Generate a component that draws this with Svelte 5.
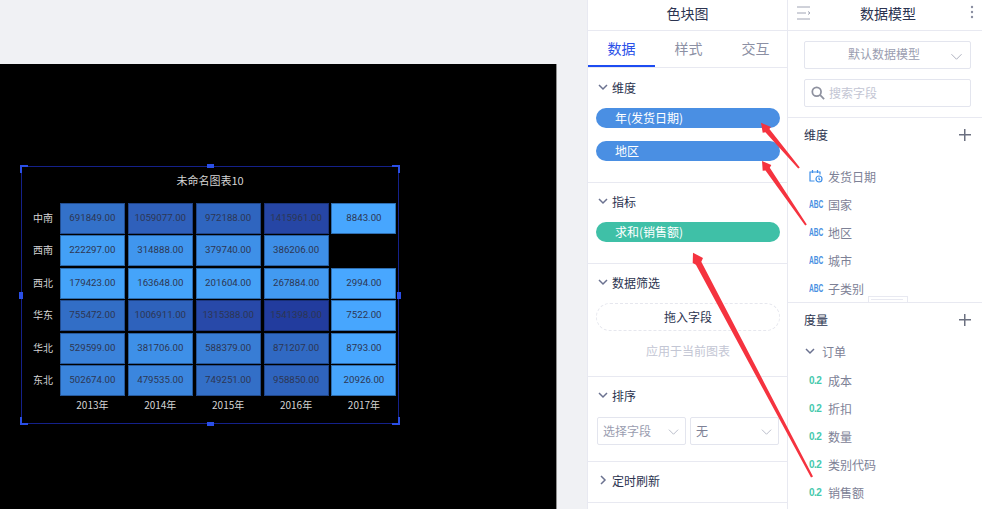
<script>
  const years = ['2013年', '2014年', '2015年', '2016年', '2017年'];
  const rows = [
    { name: '中南', cells: [['691849.00', '#3371c9'], ['1059077.00', '#2f60bb'], ['972188.00', '#2f65bf'], ['1415961.00', '#2646a5'], ['8843.00', '#47a6fe']] },
    { name: '西南', cells: [['222297.00', '#43a0f6'], ['314888.00', '#4096ee'], ['379740.00', '#3e90e8'], ['386206.00', '#3e8fe7'], null] },
    { name: '西北', cells: [['179423.00', '#44a3f9'], ['163648.00', '#45a4fa'], ['201604.00', '#44a1f7'], ['267884.00', '#429af1'], ['2994.00', '#48a7ff']] },
    { name: '华东', cells: [['755472.00', '#326ec6'], ['1006911.00', '#2e62bc'], ['1315388.00', '#2849a9'], ['1541398.00', '#223c9e'], ['7522.00', '#47a6fe']] },
    { name: '华北', cells: [['529599.00', '#3a82da'], ['381706.00', '#3e90e8'], ['588379.00', '#387dd5'], ['871207.00', '#3069c3'], ['8793.00', '#47a6fe']] },
    { name: '东北', cells: [['502674.00', '#3a84dc'], ['479535.00', '#3b86de'], ['749251.00', '#336fc7'], ['958850.00', '#2f64be'], ['20926.00', '#47a5fc']] }
  ];
  const dims = [
    { t: 'date', name: '发货日期' },
    { t: 'abc', name: '国家' },
    { t: 'abc', name: '地区' },
    { t: 'abc', name: '城市' },
    { t: 'abc', name: '子类别' }
  ];
  const measures = ['成本', '折扣', '数量', '类别代码', '销售额'];
</script>

<div class="page">
  <div class="stage">
    <div class="canvas">
      <div class="chart">
        <span class="h tl"></span><span class="h tr"></span><span class="h bl"></span><span class="h br"></span>
        <span class="m mt"></span><span class="m mb"></span><span class="m ml"></span><span class="m mr"></span>
        <div class="chart-title">未命名图表10</div>
        <div class="heat">
          {#each rows as row}
            <div class="rowname">{row.name}</div>
            {#each row.cells as c}
              {#if c}
                <div class="cell" style="background:{c[1]}">{c[0]}</div>
              {:else}
                <div></div>
              {/if}
            {/each}
          {/each}
          <div></div>
          {#each years as y}
            <div class="year">{y}</div>
          {/each}
        </div>
      </div>
    </div>
  </div>

  <aside class="config">
    <div class="head">色块图</div>
    <div class="tabs">
      <div class="tab active">数据</div>
      <div class="tab">样式</div>
      <div class="tab">交互</div>
    </div>
    <section class="sec s1">
      <div class="sec-title first"><svg class="chev" viewBox="0 0 10 10"><path d="M1 3l4 4 4-4" /></svg>维度</div>
      <div class="pill blue">年(发货日期)</div>
      <div class="pill blue">地区</div>
    </section>
    <section class="sec s2">
      <div class="sec-title tight"><svg class="chev" viewBox="0 0 10 10"><path d="M1 3l4 4 4-4" /></svg>指标</div>
      <div class="pill green">求和(销售额)</div>
    </section>
    <section class="sec s3">
      <div class="sec-title tight"><svg class="chev" viewBox="0 0 10 10"><path d="M1 3l4 4 4-4" /></svg>数据筛选</div>
      <div class="drop">拖入字段</div>
      <div class="apply">应用于当前图表</div>
    </section>
    <section class="sec s4">
      <div class="sec-title"><svg class="chev" viewBox="0 0 10 10"><path d="M1 3l4 4 4-4" /></svg>排序</div>
      <div class="selects">
        <div class="sel">选择字段<svg viewBox="0 0 12 12"><path d="M1 4l5 5 5-5" /></svg></div>
        <div class="sel dark">无<svg viewBox="0 0 12 12"><path d="M1 4l5 5 5-5" /></svg></div>
      </div>
    </section>
    <section class="sec s5">
      <div class="sec-title"><svg class="chev" viewBox="0 0 10 10"><path d="M3 1l4 4-4 4" /></svg>定时刷新</div>
    </section>
  </aside>

  <aside class="model">
    <div class="head mhead">
      <svg class="menu" viewBox="0 0 14 14"><path d="M0 1h13M0 7h9M0 13h13M11 5.500L13 7l-2 1.500" /></svg>
      数据模型
      <svg class="dots" viewBox="0 0 4 14"><circle cx="2" cy="2" r="1.200" /><circle cx="2" cy="7" r="1.200" /><circle cx="2" cy="12" r="1.200" /></svg>
    </div>
    <div class="filters">
      <div class="modelsel">默认数据模型<svg viewBox="0 0 12 12"><path d="M0.500 3.500L6 9l5.500-5.500" /></svg></div>
      <div class="search">
        <svg viewBox="0 0 16 16"><circle cx="6.500" cy="6.500" r="5" /><path d="M10.500 10.500L15 15" /></svg>
        搜索字段
      </div>
    </div>
    <div class="group-head">维度<span class="plus"></span></div>
    <div class="list">
      <div class="field clipped">订单日期</div>
      {#each dims as d}
        <div class="field">
          {#if d.t === 'date'}
            <svg class="ico" viewBox="0 0 14 14"><path d="M5.500 12H1V3h10v2.500M3.500 1v3M8.500 1v3" /><circle cx="10" cy="10" r="3" /><path d="M10 8.500V10l1 1" /></svg>
          {:else}
            <span class="abc"><span>ABC</span></span>
          {/if}
          {d.name}
        </div>
      {/each}
    </div>
    <div class="group-head second">度量<span class="plus"></span><span class="grip"></span></div>
    <div class="order"><svg class="chev" viewBox="0 0 10 10"><path d="M1 3l4 4 4-4" /></svg>订单</div>
    {#each measures as m}
      <div class="field"><span class="num">0.2</span>{m}</div>
    {/each}
  </aside>

  <svg class="arrows" viewBox="0 0 982 509">
    <polygon points="761,122.7 771,127 769.4,129 799.8,167.4 798.2,168.6 765.4,132.2 762.7,132.7" />
    <polygon points="762,161 771.3,165 769.8,167.8 806.8,224.4 805.2,225.6 765.5,170.6 762.7,170.7" />
    <polygon points="693,252.7 703,258 701.3,261.8 813,476.4 811,477.6 695.9,264.8 692.7,263" />
  </svg>
</div>

<style>
  :global(body) {
    margin: 0;
    background: #fff;
  }

  .page {
    position: relative;
    display: flex;
    width: 982px;
    height: 509px;
    overflow: hidden;
    font-family: "Noto Sans CJK SC", "Liberation Sans", sans-serif;
    font-size: 13px;
    color: #2b3350;
  }

  .stage {
    width: 587px;
    flex: none;
    padding-top: 64px;
    box-sizing: border-box;
    background: #f0f1f4;
  }

  .canvas {
    width: 557px;
    height: 445px;
    padding: 102px 0 0 21px;
    box-sizing: border-box;
    border-right: 1px solid #8f8f8f;
    background: #000;
  }

  .chart {
    position: relative;
    width: 378px;
    height: 258px;
    box-sizing: border-box;
    border: 1px solid #14218a;
  }

  .h {
    position: absolute;
    width: 6px;
    height: 6px;
    border: 0 solid #2a4fe6;
  }

  .tl { left: -2px; top: -2px; border-width: 2px 0 0 2px; }
  .tr { right: -2px; top: -2px; border-width: 2px 2px 0 0; }
  .bl { left: -2px; bottom: -2px; border-width: 0 0 2px 2px; }
  .br { right: -2px; bottom: -2px; border-width: 0 2px 2px 0; }

  .m {
    position: absolute;
    background: #2a4fe6;
  }

  .mt, .mb {
    left: 185px;
    width: 7px;
    height: 4px;
  }

  .mt { top: -3px; }
  .mb { bottom: -3px; }

  .ml, .mr {
    top: 125px;
    width: 4px;
    height: 7px;
  }

  .ml { left: -3px; }
  .mr { right: -3px; }

  .chart-title {
    height: 36px;
    padding-top: 4px;
    box-sizing: border-box;
    text-align: center;
    line-height: 18px;
    font-size: 11px;
    color: #d4d4d4;
  }

  .heat {
    display: grid;
    grid-template-columns: 35px repeat(5, 65px);
    grid-auto-rows: 31px;
    column-gap: 2.9px;
    row-gap: 1.4px;
  }

  .rowname {
    padding-right: 4px;
    text-align: right;
    line-height: 30px;
    font-size: 10px;
    color: #d4d4d4;
  }

  .cell {
    text-align: center;
    line-height: 30px;
    font-family: Roboto, "Liberation Sans", sans-serif;
    font-size: 9.7px;
    color: #2d3653;
    box-shadow: inset 0 0 0 1px rgba(10, 25, 60, 0.4);
  }

  .year {
    text-align: center;
    line-height: 15px;
    font-size: 10px;
    color: #d4d4d4;
  }

  .config {
    width: 200px;
    flex: none;
    box-sizing: border-box;
    border-left: 1px solid #e8e9f1;
    background: #fff;
  }

  .head {
    height: 31px;
    box-sizing: border-box;
    line-height: 26px;
    text-align: center;
    font-size: 14px;
    border-bottom: 1px solid #e8e9f1;
  }

  .tabs {
    display: flex;
    height: 37px;
    box-sizing: border-box;
    border-bottom: 1px solid #e8e9f1;
  }

  .tab {
    flex: 0 0 67px;
    height: 36px;
    box-sizing: border-box;
    text-align: center;
    line-height: 34px;
    font-size: 14px;
    color: #8c90a4;
  }

  .tab.active {
    color: #2a50e8;
    border-bottom: 2px solid #1d4cf2;
  }

  .sec {
    box-sizing: border-box;
    padding: 9px 7px 0 8px;
    border-bottom: 1px solid #e8e9f1;
  }

  .s1 { height: 115px; }
  .s2 { height: 81px; }
  .s3 { height: 113px; }
  .s4 { height: 85px; }
  .s5 { height: 41px; }

  .sec-title {
    display: flex;
    align-items: center;
    height: 18px;
    font-size: 12px;
    margin-bottom: 13px;
  }

  .sec-title.first {
    margin-top: 1px;
    margin-bottom: 12px;
  }

  .sec-title.tight {
    margin-bottom: 12px;
  }

  .chev {
    width: 10px;
    height: 10px;
    margin: 0 4px 0 2px;
    fill: none;
    stroke: #6b7290;
    stroke-width: 1.5;
  }

  .pill {
    height: 20px;
    margin-bottom: 13px;
    padding-left: 19px;
    border-radius: 10px;
    line-height: 19px;
    font-size: 12px;
    color: #fff;
  }

  .blue { background: #4a8fe3; }
  .green { background: #3fc0a7; }

  .drop {
    height: 28px;
    box-sizing: border-box;
    border: 1px dashed #e6e7ee;
    border-radius: 14px;
    text-align: center;
    line-height: 26px;
    font-size: 12px;
  }

  .apply {
    margin-top: 11px;
    text-align: center;
    font-size: 12px;
    color: #c3c6d4;
  }

  .selects {
    display: flex;
    gap: 4px;
    margin-left: 1px;
  }

  .sel {
    position: relative;
    width: 89px;
    height: 28px;
    box-sizing: border-box;
    padding-left: 5px;
    border: 1px solid #e3e5ee;
    border-radius: 2px;
    line-height: 25px;
    font-size: 12px;
    color: #9a9db0;
  }

  .sel.dark {
    color: #7d8196;
  }

  .sel svg {
    position: absolute;
    right: 6px;
    top: 8px;
    width: 11px;
    height: 11px;
    fill: none;
    stroke: #b5b8c6;
  }

  .model {
    flex: 1;
    box-sizing: border-box;
    border-left: 1px solid #e8e9f1;
    background: #fff;
  }

  .mhead {
    position: relative;
    padding-left: 6px;
  }

  .menu {
    position: absolute;
    left: 9px;
    top: 6px;
    width: 14px;
    height: 14px;
    fill: none;
    stroke: #a0a4b4;
  }

  .dots {
    position: absolute;
    right: 8px;
    top: 5px;
    width: 4px;
    height: 14px;
    fill: #8a8ea0;
  }

  .filters {
    height: 87px;
    padding: 10px 11px 0 16px;
    box-sizing: border-box;
    border-bottom: 1px solid #e8e9f1;
  }

  .modelsel {
    position: relative;
    height: 28px;
    box-sizing: border-box;
    border: 1px solid #e3e5ee;
    border-radius: 2px;
    padding-right: 7px;
    text-align: center;
    line-height: 24px;
    font-size: 12px;
    color: #9a9db0;
  }

  .modelsel svg {
    position: absolute;
    right: 8px;
    top: 9px;
    width: 11px;
    height: 11px;
    fill: none;
    stroke: #a5a8b8;
  }

  .search {
    display: flex;
    align-items: center;
    gap: 4px;
    height: 28px;
    margin-top: 10px;
    padding-left: 6px;
    box-sizing: border-box;
    border: 1px solid #e3e5ee;
    border-radius: 2px;
    line-height: 24px;
    font-size: 12px;
    color: #c3c6d4;
  }

  .search svg {
    width: 14px;
    height: 14px;
    fill: none;
    stroke: #8e919f;
    stroke-width: 2;
  }

  .group-head {
    position: relative;
    height: 35px;
    padding: 8px 0 0 16px;
    box-sizing: border-box;
    line-height: 18px;
    font-size: 12px;
  }

  .group-head.second {
    height: 40px;
    border-top: 1px solid #e8e9f1;
  }

  .plus {
    position: absolute;
    right: 11px;
    top: 11px;
    width: 12px;
    height: 12px;
    background:
      linear-gradient(#6b7080, #6b7080) center / 100% 1.5px no-repeat,
      linear-gradient(#6b7080, #6b7080) center / 1.5px 100% no-repeat;
  }

  .grip {
    position: absolute;
    left: 80px;
    top: -7px;
    width: 38px;
    height: 5px;
    border: 1px solid #e8e9f1;
    border-bottom: 0;
    background: #fff;
  }

  .grip::after {
    content: "";
    position: absolute;
    left: 2px;
    right: 4px;
    top: 2px;
    height: 1px;
    background: #e8e9f1;
  }

  .list {
    height: 149px;
    overflow: hidden;
  }

  .field {
    display: flex;
    align-items: center;
    height: 28px;
    padding-left: 21px;
    font-size: 12px;
    color: #7d8196;
  }

  .field.clipped {
    margin-top: -21px;
    margin-bottom: 2px;
    padding-left: 40px;
  }

  .ico {
    width: 14px;
    height: 14px;
    margin-right: 5px;
    fill: none;
    stroke: #3f8fe8;
    stroke-width: 1.2;
  }

  .abc {
    width: 14px;
    margin-right: 5px;
    white-space: nowrap;
    line-height: 12px;
  }

  .abc span {
    display: inline-block;
    transform: scaleX(0.66);
    transform-origin: left center;
    font-family: "Liberation Sans", sans-serif;
    font-size: 10px;
    font-weight: 700;
    color: #4a90e2;
  }

  .num {
    width: 14px;
    margin-right: 5px;
    letter-spacing: -0.5px;
    font-family: "Liberation Sans", sans-serif;
    font-size: 10px;
    font-weight: 700;
    color: #45c9ad;
  }

  .order {
    display: flex;
    align-items: center;
    height: 18px;
    padding-left: 15px;
    margin-bottom: 6px;
    font-size: 12px;
    color: #7d8196;
  }

  .order .chev {
    margin-right: 7px;
  }

  .arrows {
    position: absolute;
    left: 0;
    top: 0;
    width: 982px;
    height: 509px;
    pointer-events: none;
  }

  .arrows polygon {
    fill: #f5333f;
  }
</style>
